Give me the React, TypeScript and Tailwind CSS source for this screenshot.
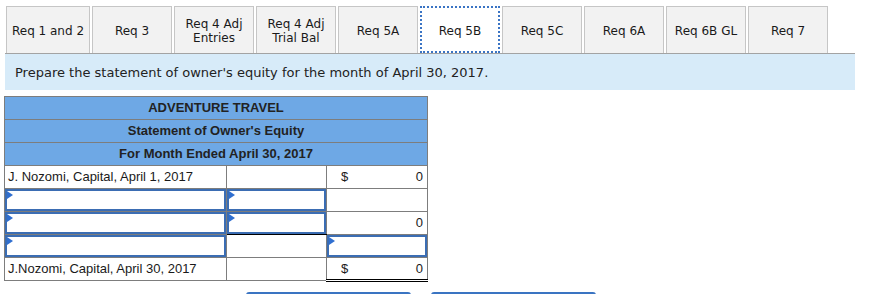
import { ReactNode } from 'react';

const tabs: { label: ReactNode; wide?: boolean; active?: boolean }[] = [
  { label: 'Req 1 and 2', wide: true },
  { label: 'Req 3' },
  { label: <>Req 4 Adj<br />Entries</> },
  { label: <>Req 4 Adj<br />Trial Bal</> },
  { label: 'Req 5A' },
  { label: 'Req 5B', active: true },
  { label: 'Req 5C' },
  { label: 'Req 6A' },
  { label: 'Req 6B GL' },
  { label: 'Req 7' },
];

function InputBox({ className = '' }: { className?: string }) {
  return (
    <div className={`relative h-[22px] border-2 border-[#3b6db3] bg-white ${className}`}>
      <div className="absolute left-0 top-0 w-0 h-0 border-y-[4px] border-y-transparent border-l-[6px] border-l-[#2f6fd0]" />
    </div>
  );
}

function Amount({ dollar, value }: { dollar?: boolean; value?: string }) {
  return (
    <div className="flex items-center justify-between pl-[14px] pr-[4px]">
      <span>{dollar ? '$' : ''}</span>
      <span>{value}</span>
    </div>
  );
}

export default function App() {
  const cell = 'border border-[#7d7d7d] h-[23px] p-0 align-middle leading-[16px]';

  return (
    <div className="w-[870px] h-[294px] bg-white overflow-hidden">
      {/* Tabs */}
      <div className="ml-[5px] mt-[6px] w-[850px] pl-[1px] flex gap-[2px] border-b border-[#a3a3a3] font-['DejaVu_Sans',sans-serif] text-[12px] leading-[14px] text-[#1a1a1a]">
        {tabs.map((tab, i) => (
          <div
            key={i}
            className={`${tab.wide ? 'w-[84px]' : 'w-[80px]'} h-[47px] pt-[2px] flex items-center justify-center text-center ${
              tab.active
                ? 'bg-white border-2 border-dotted border-[#3a74c4]'
                : 'bg-[#f2f2f2] border border-b-0 border-[#c6c6c6]'
            }`}
          >
            <span>{tab.label}</span>
          </div>
        ))}
      </div>

      {/* Instruction */}
      <div className="ml-[5px] w-[850px] h-[36px] bg-[#d7ebf9] flex items-center pl-[10px] pt-[1px] font-['DejaVu_Sans',sans-serif] text-[13px] text-[#222]">
        Prepare the statement of owner's equity for the month of April 30, 2017.
      </div>

      {/* Statement */}
      <table className="ml-[4px] mt-[6px] border-collapse font-['Liberation_Sans',Arial,sans-serif] text-[13px] text-[#1a1a1a]">
        <colgroup>
          <col className="w-[222px]" />
          <col className="w-[100px]" />
          <col className="w-[101px]" />
        </colgroup>
        <tbody>
          {['ADVENTURE TRAVEL', "Statement of Owner's Equity", 'For Month Ended April 30, 2017'].map((t) => (
            <tr key={t}>
              <td colSpan={3} className={`${cell} bg-[#6ea8e5] text-center font-bold text-[#222]`}>
                {t}
              </td>
            </tr>
          ))}
          <tr>
            <td className={`${cell} pl-[3px]`}>J. Nozomi, Capital, April 1, 2017</td>
            <td className={cell} />
            <td className={cell}>
              <Amount dollar value="0" />
            </td>
          </tr>
          <tr>
            <td className={cell}><InputBox /></td>
            <td className={cell}><InputBox /></td>
            <td className={cell} />
          </tr>
          <tr>
            <td className={cell}><InputBox /></td>
            <td className={`${cell} border-b-black`}><InputBox /></td>
            <td className={cell}>
              <Amount value="0" />
            </td>
          </tr>
          <tr>
            <td className={cell}><InputBox /></td>
            <td className={cell} />
            <td className={`${cell} border-b-black`}><InputBox /></td>
          </tr>
          <tr>
            <td className={`${cell} pl-[3px]`}>J.Nozomi, Capital, April 30, 2017</td>
            <td className={cell} />
            <td className={`${cell} border-b-[3px] border-b-black border-double`}>
              <Amount dollar value="0" />
            </td>
          </tr>
        </tbody>
      </table>

      {/* Nav buttons */}
      <div className="ml-[246px] mt-[10px] flex gap-[20px]">
        <div className="w-[165px] h-[10px] rounded-t-[3px] bg-[#3a74c2]" />
        <div className="w-[165px] h-[10px] rounded-t-[3px] bg-[#3a74c2]" />
      </div>
    </div>
  );
}
